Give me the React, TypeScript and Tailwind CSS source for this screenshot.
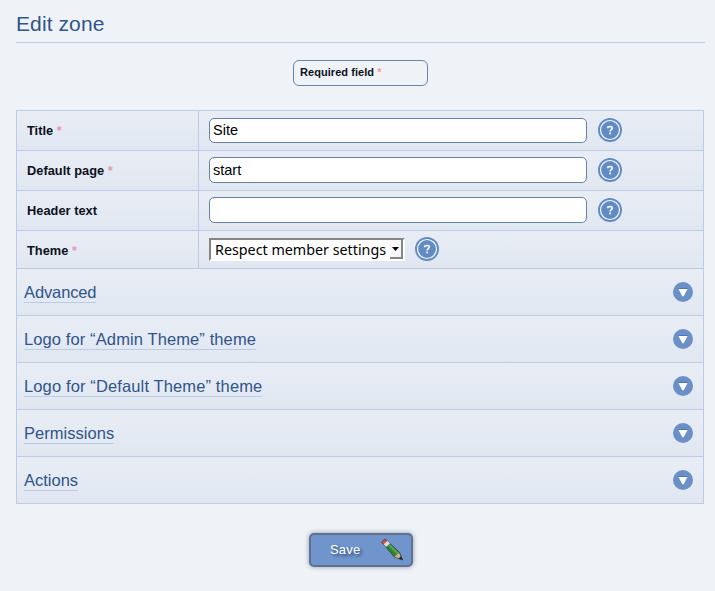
import React from "react";

const ROW = "flex border-b border-[#bccbe6] bg-linear-to-b from-[#e8edf5] to-[#e1e7f1]";

function Help() {
  return (
    <svg width="24" height="24" viewBox="0 0 24 24" className="block shrink-0">
      <circle cx="12" cy="12" r="12" fill="#628bc4" />
      <circle cx="12" cy="12" r="9.5" fill="none" stroke="#f4f8fd" strokeWidth="1.2" />
      <path d="M9.700 10.200V9.800C9.700 8.900 10.600 8.500 12 8.500c1.500 0 2.300.6 2.300 1.600 0 1.500-2.200 1.500-2.200 3.500" fill="none" stroke="#f4f8fd" strokeWidth="1.700" />
      <rect x="11.200" y="14.600" width="1.800" height="1.700" fill="#f4f8fd" />
    </svg>
  );
}

function Label({ text, required, low }: { text: string; required?: boolean; low?: boolean }) {
  return (
    <div className={`flex w-[182px] shrink-0 items-center border-r border-[#bccbe6] pl-[10px] text-[12.8px] font-bold text-[#0c111c] ${low ? "pt-[2px]" : ""}`}>
      <span className="whitespace-pre tracking-[0.03px]">
        {text}
        {required && <span className="text-[#e79aa5]"> *</span>}
      </span>
    </div>
  );
}

function Field({ label, value, required, first }: { label: string; value: string; required?: boolean; first?: boolean }) {
  return (
    <div className={`${ROW} h-[40px]`}>
      <Label text={label} required={required} />
      <div className="flex items-start pl-[10px]">
        <input
          aria-label={label}
          defaultValue={value}
          className={`w-[378px] rounded-[5px] border border-[#6883a8] bg-white px-[3px] text-[14.500px] text-black outline-none ${first ? "mt-[7px] h-[25px] pb-[2px]" : "mt-[6px] h-[26px]"}`}
        />
        <div className="ml-[11px] mt-[7px]">
          <Help />
        </div>
      </div>
    </div>
  );
}

function Section({ title, tracking = "" }: { title: string; tracking?: string }) {
  return (
    <div className={`${ROW} h-[47px] items-start justify-between pl-[7px] pr-[10px]`}>
      <a className={`mt-[13px] block h-[21px] whitespace-nowrap border-b border-[#bccbe6] text-[16.500px] leading-[20px] text-[#30548c] ${tracking}`}>{title}</a>
      <svg width="20" height="20" viewBox="0 0 20 20" className="mt-[13px] block">
        <circle cx="10" cy="10" r="10" fill="#6b90c8" />
        <path d="M5.500 7h9L10.700 14.300H9.300z" fill="#fff" />
        <path d="M5.500 6.500h9" stroke="#4a76b5" />
      </svg>
    </div>
  );
}

function Pencil() {
  return (
    <svg width="24" height="24" viewBox="0 0 24 24" className="block">
      <path d="M1.500 4 5 1 19.500 14.500 22.500 22 14.500 19z" fill="#398b39" stroke="#35404a" strokeWidth="1" strokeLinejoin="round" />
      <path d="m7 8.500 9 9.500" stroke="#2c7a30" strokeWidth="1" />
      <path d="M9.500 7 18 15.500" stroke="#61b04d" strokeWidth="1.500" />
      <path d="m3.500 6 3.700-3.200 2.800 2.600-4 3.500z" fill="#d7dce2" />
      <path d="M1.800 4 5 1.300 7.200 3 3.700 6z" fill="#e0443a" />
      <path d="m14.500 18.700 4.500-4 3 7z" fill="#cbb28c" />
      <path d="m18.500 20.500 2.500-2.300L22.500 22z" fill="#222" />
    </svg>
  );
}

export default function App() {
  return (
    <div className="h-[591px] w-[715px] overflow-hidden bg-[#eff3f8] pl-[16px] font-['Liberation_Sans',Arial,sans-serif]">
      <h1 className="h-[43px] w-[689px] border-b border-[#bccbe6] pt-[12px] text-[21px] leading-[24px] tracking-[0.1px] text-[#30548c]">Edit zone</h1>
      <div className="ml-[277px] mt-[17px] h-[26px] w-[135px] rounded-[6px] border border-[#6883a8] pl-[6px] text-[11px] font-bold leading-[23px] tracking-[0.05px] text-[#0c111c]">
        Required field <span className="text-[#f09ba3]">*</span>
      </div>
      <div className="mt-[24px] w-[688px] border-x border-t border-[#bccbe6]">
        <Field label="Title" value="Site" required first />
        <Field label="Default page" value="start" required />
        <Field label="Header text" value="" />
        <div className={`${ROW} h-[38px]`}>
          <Label text="Theme" required low />
          <div className="flex items-start pl-[10px]">
            <div className="mt-[7px] flex h-[23px] w-[196px] justify-between border-2 border-b-white border-l-[#858585] border-r-white border-t-[#858585] bg-white pl-[4px]">
              <span className="whitespace-nowrap font-['Noto_Sans',sans-serif] text-[14.300px] leading-[19px] text-black">Respect member settings</span>
              <span className="flex h-[19px] w-[13px] items-center justify-center border-b-2 border-r-2 border-[#858585] bg-[#f7f7f7]">
                <svg width="7" height="4" viewBox="0 0 7 4">
                  <path d="M0 0h7L3.500 4z" />
                </svg>
              </span>
            </div>
            <div className="ml-[10px] mt-[6px]">
              <Help />
            </div>
          </div>
        </div>
        <Section title="Advanced" tracking="tracking-[-0.12px]" />
        <Section title="Logo for “Admin Theme” theme" tracking="tracking-[0.11px]" />
        <Section title="Logo for “Default Theme” theme" tracking="tracking-[0.13px]" />
        <Section title="Permissions" tracking="tracking-[0.03px]" />
        <Section title="Actions" />
      </div>
      <button className="ml-[293px] mt-[29px] flex h-[34px] w-[104px] items-center justify-between rounded-[5px] border-2 border-[#61718e] bg-[#7094cc] pl-[19px] pr-[7px] text-[13px] text-white shadow-[0_0_5px_rgba(80,95,120,0.6)]">
        <span className="tracking-[0.2px] [text-shadow:2px_2px_3px_#2d456e]">Save</span>
        <Pencil />
      </button>
    </div>
  );
}
